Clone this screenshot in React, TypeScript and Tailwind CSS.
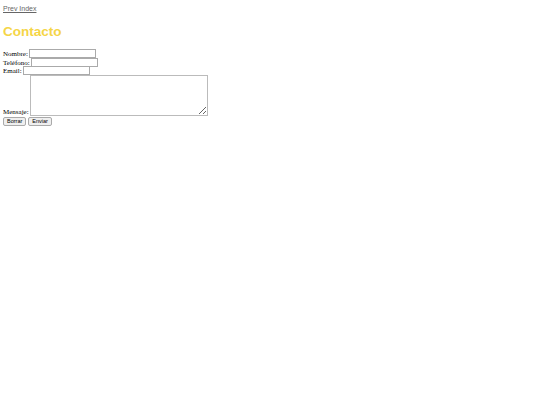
export default function App() {
  return (
    <div className="min-h-[405px] w-[540px] bg-white px-[3px] pt-[4px] text-[7px] leading-[8px] text-black">
      <a href="#" className="block w-fit font-['Liberation_Sans',Arial,sans-serif] text-[7px] leading-[9px] text-[#666] underline">
        Prev Index
      </a>

      <h1 className="mt-[11px] font-['Liberation_Sans',Arial,sans-serif] text-[13.5px] font-bold leading-[16px] text-[#f5d547]">
        Contacto
      </h1>

      <form className="mt-[9px] flex flex-col font-['Liberation_Serif','Times_New_Roman',serif] text-[7px] leading-[8px] text-black">
        <div className="flex h-[9px] items-end">
          <label>Nombre:</label>
          <input className="ml-[1px] h-[9px] w-[67px] border border-[#aaa] bg-white" />
        </div>
        <div className="flex h-[8.5px] items-end">
          <label>Teléfono:</label>
          <input className="ml-[1.5px] h-[9px] w-[67px] border border-[#aaa] bg-white" />
        </div>
        <div className="flex h-[8.5px] items-end">
          <label>Email:</label>
          <input className="ml-[1.5px] h-[9px] w-[67px] border border-[#aaa] bg-white" />
        </div>
        <div className="flex items-end">
          <label>Mensaje:</label>
          <textarea className="ml-[1px] h-[41px] w-[178px] border border-[#bbb] bg-white" />
        </div>
        <div className="mt-[1px] flex gap-[2px] font-['Liberation_Sans',Arial,sans-serif] text-[5.5px]">
          <button type="reset" className="h-[9px] rounded-[2px] border border-[#aaa] bg-[#efefef] px-[3px] leading-[7px]">
            Borrar
          </button>
          <button type="submit" className="h-[9px] rounded-[2px] border border-[#aaa] bg-[#efefef] px-[3px] leading-[7px]">
            Enviar
          </button>
        </div>
      </form>
    </div>
  )
}
